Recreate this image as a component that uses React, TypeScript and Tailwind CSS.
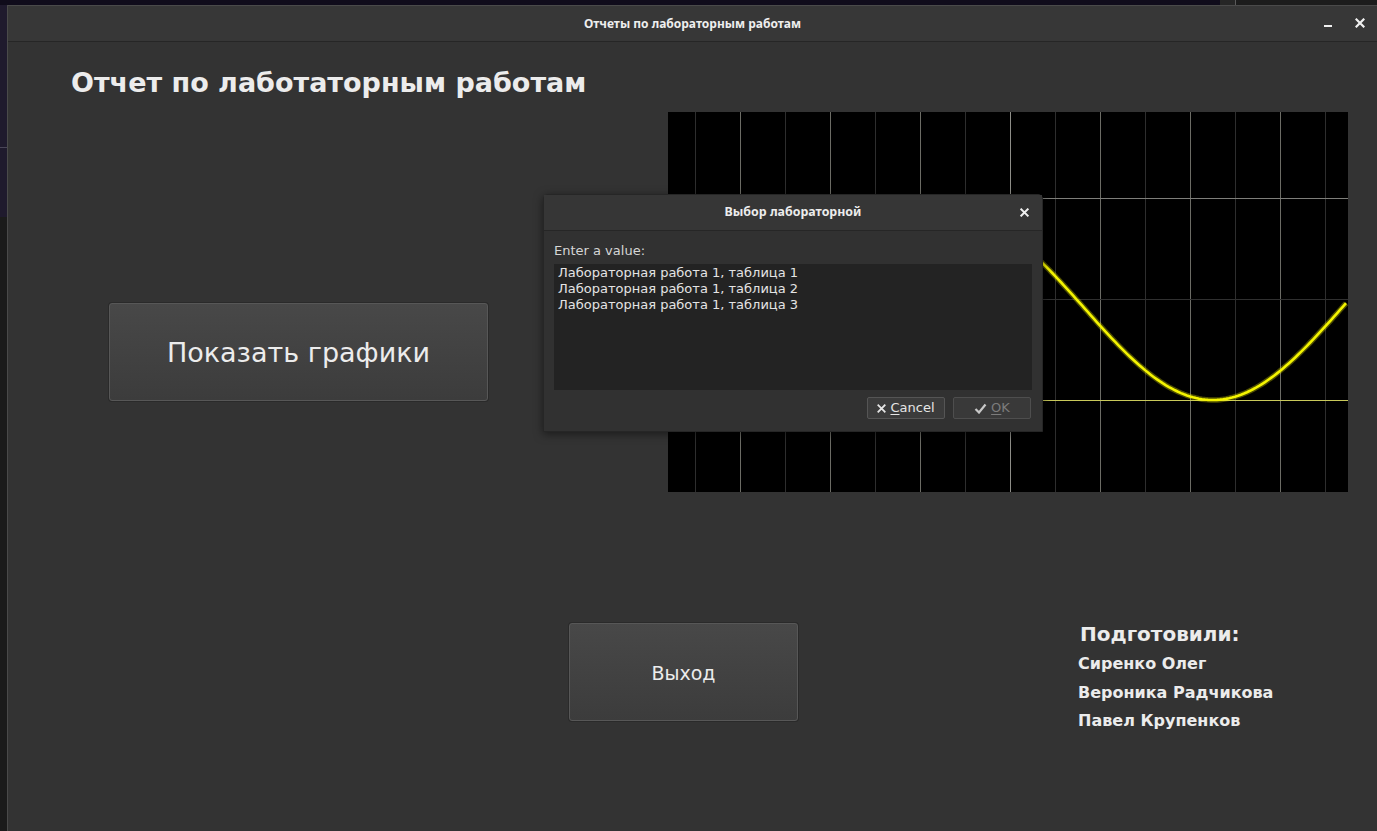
import React from 'react';

const GRAPH_W = 680;
const GRAPH_H = 380;

// vertical grid lines, every 45px; every other one is brighter
const vLines = Array.from({ length: 15 }, (_, i) => 27 + i * 45);

function curvePath() {
  const pts: string[] = [];
  for (let x = 0; x <= GRAPH_W; x += 3) {
    const y = 288 - 92 * (1 - Math.cos(0.0122 * (x - 545)));
    pts.push(`${x === 0 ? 'M' : 'L'}${x},${y.toFixed(2)}`);
  }
  return pts.join(' ');
}

function Graph() {
  const d = curvePath();
  return (
    <div className="h-[380px] w-[680px] shrink-0 bg-black">
      <svg width={GRAPH_W} height={GRAPH_H} viewBox={`0 0 ${GRAPH_W} ${GRAPH_H}`} className="block">
        {vLines.map((x, i) => (
          <line
            key={x}
            x1={x + 0.5}
            x2={x + 0.5}
            y1={0}
            y2={GRAPH_H}
            stroke={x === 342 ? '#8e8e88' : i % 2 === 1 ? '#6c6c65' : '#2e2e2e'}
            strokeWidth={1}
          />
        ))}
        <line x1={0} x2={GRAPH_W} y1={86.5} y2={86.5} stroke="#7e7e7a" strokeWidth={1} />
        <line x1={0} x2={GRAPH_W} y1={187.5} y2={187.5} stroke="#303030" strokeWidth={1} />
        <line x1={0} x2={GRAPH_W} y1={288.5} y2={288.5} stroke="#c9c95a" strokeWidth={1} />
        <path d={d} fill="none" stroke="#ffff00" strokeOpacity={0.3} strokeWidth={5.5} />
        <path d={d} fill="none" stroke="#f4f400" strokeWidth={2.6} />
      </svg>
    </div>
  );
}

function BigButton({ label, className }: { label: string; className: string }) {
  return (
    <button
      className={`flex shrink-0 items-center justify-center rounded-[3px] border border-[#575757] bg-gradient-to-b from-[#484848] to-[#3c3c3c] pt-[3px] text-[#ececec] shadow-[0_0_0_1px_#2a2a2a] ${className}`}
    >
      {label}
    </button>
  );
}

function XIcon({ size = 9, w = 2.2 }: { size?: number; w?: number }) {
  return (
    <svg width={size} height={size} viewBox="0 0 10 10" className="block">
      <path d="M1.5 1.5 L8.5 8.5 M8.5 1.5 L1.5 8.5" stroke="currentColor" strokeWidth={w} strokeLinecap="square" />
    </svg>
  );
}

function Dialog() {
  return (
    <div className="absolute left-[535px] top-[152px] flex h-[238px] w-[500px] flex-col rounded-t-[5px] border border-[#262626] bg-[#313131] shadow-[0_2px_10px_rgba(0,0,0,0.5)]">
      <div className="relative flex h-[36px] shrink-0 items-center justify-center border-b border-[#262626] bg-[#363636] font-['Noto_Sans',sans-serif] text-[12.4px] font-bold text-[#ececec]">
        Выбор лабораторной
        <span className="absolute right-[13px] top-[13px] text-[#f0f0f0]">
          <XIcon />
        </span>
      </div>
      <div className="flex flex-1 flex-col px-[10px] pt-[12px] font-['DejaVu_Sans',sans-serif] text-[13px]">
        <div className="leading-[16px] text-[#d6d6d6]">Enter a value:</div>
        <div className="mt-[5px] h-[126px] bg-[#232323] px-[4px] pt-px leading-[16px] text-[#e4e4e4]">
          <div>Лабораторная работа 1, таблица 1</div>
          <div>Лабораторная работа 1, таблица 2</div>
          <div>Лабораторная работа 1, таблица 3</div>
        </div>
        <div className="mt-[7px] flex justify-end gap-[8px] pr-px">
          <button className="flex h-[22px] w-[78px] items-center justify-center gap-[4px] rounded-[2px] border border-[#555] bg-[#3b3b3b] text-[#e6e6e6]">
            <XIcon size={9} w={2} />
            <span>
              <span className="underline underline-offset-2">C</span>ancel
            </span>
          </button>
          <button className="flex h-[22px] w-[78px] items-center justify-center gap-[4px] rounded-[2px] border border-[#4e4e4e] bg-[#393939] text-[#7c7c7c]">
            <svg width={13} height={11} viewBox="0 0 13 11" className="block">
              <path d="M1.5 6 L5 9.5 L11.5 1.5" fill="none" stroke="#c8c8c8" strokeWidth={2.2} />
            </svg>
            <span>
              <span className="underline underline-offset-2">O</span>K
            </span>
          </button>
        </div>
      </div>
    </div>
  );
}

export default function App() {
  return (
    <div className="flex h-[831px] w-[1377px] flex-col overflow-hidden bg-[#100c1b]">
      <div className="flex h-[5px] shrink-0">
        <div className="w-[1220px]" />
        <div className="w-[15px] bg-[#262626]" />
        <div className="w-px bg-[#5a5a5a]" />
        <div className="flex-1 bg-[#1c1c1c]" />
      </div>
      <div className="flex flex-1">
        <div className="flex w-[7px] shrink-0 flex-col">
          <div className="h-[142px] bg-[#1f1a2d]" />
          <div className="h-px bg-[#4a4658]" />
          <div className="h-[69px] bg-[#1f1a2d]" />
          <div className="flex-1 bg-[#1b1b1b]" />
        </div>
        <div className="flex flex-1 flex-col border-l border-t border-[#4a4a4a] bg-[#333333]">
          {/* window title bar */}
          <div className="relative flex h-[36px] shrink-0 items-center justify-center border-b border-[#262626] bg-[#373737] font-['Noto_Sans',sans-serif] text-[12px] font-bold text-[#eeeeee]">
            Отчеты по лабораторным работам
            <span className="absolute right-[45px] top-[19px] h-[2px] w-[8px] bg-[#f0f0f0]" />
            <span className="absolute right-[12px] top-[12px] text-[#f0f0f0]">
              <XIcon size={10} w={2.2} />
            </span>
          </div>

          {/* content */}
          <div className="relative flex flex-1 flex-col">
            <h1 className="h-[70px] pl-[63px] pt-[27px] font-['DejaVu_Sans',sans-serif] text-[27px] font-bold leading-[27px] text-[#ececec]">
              Отчет по лаботаторным работам
            </h1>
            <div className="flex items-start">
              <BigButton
                label="Показать графики"
                className="ml-[101px] mt-[191px] h-[98px] w-[379px] font-['DejaVu_Sans',sans-serif] text-[27px]"
              />
              <div className="ml-[180px]">
                <Graph />
              </div>
            </div>
            <div className="mt-[131px] flex items-start">
              <BigButton
                label="Выход"
                className="ml-[561px] h-[98px] w-[229px] font-['DejaVu_Sans',sans-serif] text-[19px]"
              />
              <div className="ml-[280px] font-['DejaVu_Sans',sans-serif] font-bold text-[#ececec]">
                <div className="pl-[2px] text-[20px] leading-[23px]">Подготовили:</div>
                <div className="mt-[4px] text-[16px] leading-[28.5px]">Сиренко Олег</div>
                <div className="text-[16px] leading-[28.5px]">Вероника Радчикова</div>
                <div className="text-[16px] leading-[28.5px]">Павел Крупенков</div>
              </div>
            </div>
            <Dialog />
          </div>
        </div>
      </div>
    </div>
  );
}
